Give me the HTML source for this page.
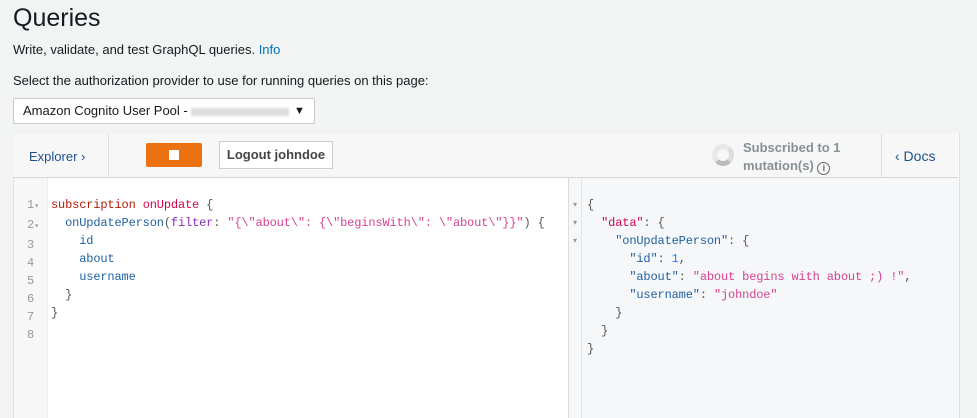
<!DOCTYPE html><html><head><style>
body{margin:0;width:977px;height:418px;background:#f2f3f3;font-family:"Liberation Sans",sans-serif;color:#16191f;position:relative;overflow:hidden}
.a{position:absolute}
.m{font-family:"Liberation Mono",monospace;font-size:12px;line-height:18px;white-space:pre;letter-spacing:-0.15px}
.kw{color:#b11a04}.df{color:#d2054e}.fn{color:#1f61a0}.ar{color:#8b2bb9}.st{color:#d64292}.nm{color:#2882f9}.pk{color:#1f61a0}.p{color:#555}
</style></head><body>
<div class="a" style="left:13px;top:4px;font-size:25px">Queries</div>
<div class="a" style="left:13px;top:42px;font-size:13px">Write, validate, and test GraphQL queries. <span style="color:#0073bb">Info</span></div>
<div class="a" style="left:13px;top:73px;font-size:13px">Select the authorization provider to use for running queries on this page:</div>
<div class="a" style="left:13px;top:98px;width:302px;height:26px;background:#fff;border:1px solid #ccc;border-radius:2px;box-sizing:border-box;font-size:13px;line-height:24px;padding-left:9px">Amazon Cognito User Pool - <span style="display:inline-block;width:98px;height:8px;background:#ddd;vertical-align:middle;filter:blur(1px)"></span><span style="position:absolute;left:280px;top:0;font-size:11px">▼</span></div>
<div class="a" style="left:13px;top:134px;width:945px;height:284px;background:#fff;border-left:1px solid #e0e0e0;border-right:1px solid #e0e0e0"></div>
<div class="a" style="left:13px;top:134px;width:945px;height:44px;background:#f7f7f7;border-bottom:1px solid #d5d5d5;box-sizing:border-box"></div>
<div class="a" style="left:108px;top:134px;width:1px;height:44px;background:#e0e0e0"></div>
<div class="a" style="left:881px;top:134px;width:1px;height:44px;background:#e0e0e0"></div>
<div class="a" style="left:29px;top:149px;font-size:13px;color:#1f4f8f">Explorer ›</div>
<div class="a" style="left:146px;top:143px;width:56px;height:24px;background:#ec7211;border-radius:2px"><div style="position:absolute;left:23px;top:7px;width:10px;height:10px;background:#fff"></div></div>
<div class="a" style="left:219px;top:141px;width:114px;height:28px;border:1px solid #ccc;background:#fff;box-sizing:border-box;font-size:13px;font-weight:bold;color:#444;line-height:26px;text-align:center">Logout johndoe</div>
<div class="a" style="left:712px;top:144px;width:22px;height:22px;border-radius:50%;border:5px solid #e8e8e8;box-sizing:border-box;border-bottom-color:#bbb;border-right-color:#ddd"></div>
<div class="a" style="left:743px;top:139px;font-size:13px;font-weight:bold;color:#879196;line-height:18px">Subscribed to 1<br>mutation(s) <span style="display:inline-block;width:11px;height:11px;border:1.5px solid #666;border-radius:50%;font-size:9px;line-height:11px;text-align:center;color:#666;vertical-align:-1px">i</span></div>
<div class="a" style="left:895px;top:148px;font-size:14px;color:#1f4f8f">‹ Docs</div>
<div class="a" style="left:14px;top:178px;width:33px;height:240px;background:#f7f7f7;border-right:1px solid #eee"></div>
<div class="a" style="left:568px;top:178px;width:390px;height:240px;background:#f6f7f9;border-left:1px solid #ddd"></div>
<div class="a" style="left:581px;top:178px;width:1px;height:240px;background:#e3e3e3"></div>
<div class="a m" style="left:27px;top:196px;color:#999;font-size:12px;letter-spacing:0">1<span style="font-size:8px">▾</span>
2<span style="font-size:8px">▾</span>
3
4
5
6
7
8</div>
<div class="a m" style="left:51px;top:196px;color:#555"><span class="kw">subscription</span> <span class="df">onUpdate</span> {
  <span class="fn">onUpdatePerson</span>(<span class="ar">filter</span>: <span class="st">"{\"about\": {\"beginsWith\": \"about\"}}"</span>) {
    <span class="fn">id</span>
    <span class="fn">about</span>
    <span class="fn">username</span>
  }
}</div>
<div class="a" style="left:573px;top:196px;color:#999;font-size:8px;line-height:18px;font-family:'DejaVu Sans',sans-serif">▾<br>▾<br>▾</div>
<div class="a m" style="left:587px;top:196px;color:#555">{
  <span class="df">"data"</span>: {
    <span class="pk">"onUpdatePerson"</span>: {
      <span class="pk">"id"</span>: <span class="nm">1</span>,
      <span class="pk">"about"</span>: <span class="st">"about begins with about ;) !"</span>,
      <span class="pk">"username"</span>: <span class="st">"johndoe"</span>
    }
  }
}</div>
</body></html>
